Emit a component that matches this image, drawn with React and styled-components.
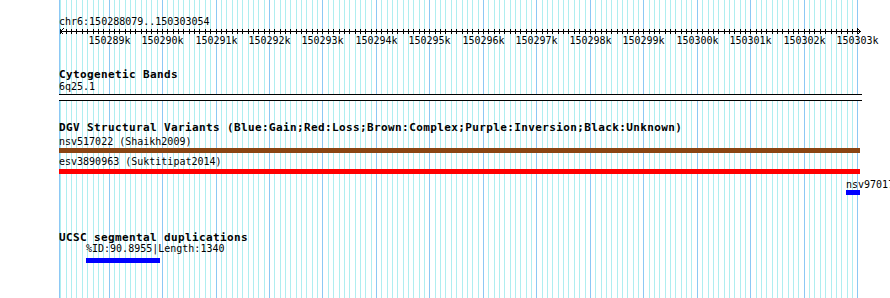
import React from "react";
import styled, { createGlobalStyle } from "styled-components";

const START = 150288079;
const END = 150303054;
const WIDTH = 803;
const SCALE = 0.05348;

// panel-relative pixel for a base position
const toX = (bp) => {
  const clamped = Math.min(Math.max(bp, START), END);
  return Math.floor(0.8 + (clamped - START) * SCALE);
};

const GlobalStyle = createGlobalStyle`
  body {
    margin: 0;
    background: #fff;
  }
`;

const Panel = styled.div`
  position: relative;
  width: ${WIDTH}px;
  height: 298px;
  margin-left: 59px;
`;

const GridLayer = styled.svg`
  position: absolute;
  top: 0;
  left: 0;
  overflow: hidden;
  shape-rendering: crispEdges;
`;

const Tracks = styled.div`
  position: relative;
  display: flex;
  flex-direction: column;
  font-family: "DejaVu Sans Mono", "Liberation Mono", monospace;
  color: #000;
`;

const Label = styled.div`
  font-size: 10px;
  line-height: 13px;
  height: 13px;
  white-space: nowrap;
  margin-top: ${(p) => p.$top || 0}px;
`;

const TrackTitle = styled.div`
  font-size: 11px;
  font-weight: bold;
  letter-spacing: 0.38px;
  line-height: 13px;
  height: 13px;
  white-space: nowrap;
  margin-top: ${(p) => p.$top || 0}px;
`;

const Ruler = styled.svg`
  display: block;
  overflow: visible;
  shape-rendering: crispEdges;
`;

const Cytoband = styled.div`
  margin-top: 1px;
  height: 5px;
  background: #fff;
  border-top: 1px solid #000;
  border-bottom: 1px solid #000;
`;

const Feature = styled.div`
  display: flex;
  flex-direction: column;
  align-items: flex-start;
  margin-top: ${(p) => p.$top || 0}px;
`;

const Bar = styled.div`
  height: 5px;
  margin-top: ${(p) => p.$gap || 0}px;
  background: ${(p) => p.$color};
`;

const minorTicks = [];
for (let bp = 150288100; bp <= END; bp += 100) minorTicks.push(bp);
const majorTicks = minorTicks.filter((bp) => bp % 1000 === 0);

const Grid = () => (
  <GridLayer width={WIDTH} height={298}>
    {minorTicks.map((bp) => (
      <rect
        key={bp}
        x={toX(bp)}
        y={0}
        width={1}
        height={298}
        fill={bp % 1000 === 0 ? "#8cc8f4" : "#afeef0"}
      />
    ))}
    <rect x={0} y={0} width={1} height={298} fill="#8cc8f4" />
  </GridLayer>
);

const Scale = () => (
  <Ruler width={WIDTH} height={19}>
    <rect x={1} y={3} width={WIDTH - 2} height={1} fill="#000" />
    <path d="M1.5 3.5 L4.5 0.5 M1.5 3.5 L4.5 6.5" stroke="#000" fill="none" />
    <path d="M801.5 3.5 L798.5 0.5 M801.5 3.5 L798.5 6.5" stroke="#000" fill="none" />
    {minorTicks.map((bp) => (
      <rect key={bp} x={toX(bp)} y={1} width={1} height={5} fill="#000" />
    ))}
    {majorTicks.map((bp) => (
      <text
        key={bp}
        x={toX(bp) + 0.5}
        y={16}
        textAnchor="middle"
        fontFamily='"DejaVu Sans Mono", "Liberation Mono", monospace'
        fontSize="10"
        fill="#000"
      >
        {bp / 1000}k
      </text>
    ))}
  </Ruler>
);

const dgv = [
  { name: "nsv517022 (Shaikh2009)", start: 150280000, end: 150320000, color: "#8b4513", top: 1, gap: 0 },
  { name: "esv3890963 (Suktitipat2014)", start: 150270000, end: 150330000, color: "#ff0000", top: 2, gap: 1 },
  { name: "nsv97017", start: 150302780, end: 150306000, color: "#0000ff", top: 4, gap: -1 },
];

const FeatureRow = ({ f }) => {
  const x = toX(f.start);
  const w = toX(f.end) - x;
  return (
    <Feature $top={f.top}>
      <Label style={{ marginLeft: x }}>{f.name}</Label>
      <Bar $color={f.color} $gap={f.gap} style={{ marginLeft: x, width: w }} />
    </Feature>
  );
};

const App = () => (
  <>
    <GlobalStyle />
    <Panel>
      <Grid />
      <Tracks>
        <Label $top={15}>chr6:150288079..150303054</Label>
        <Scale />

        <TrackTitle $top={21}>Cytogenetic Bands</TrackTitle>
        <Label $top={-1}>6q25.1</Label>
        <Cytoband />

        <TrackTitle $top={20}>
          DGV Structural Variants (Blue:Gain;Red:Loss;Brown:Complex;Purple:Inversion;Black:Unknown)
        </TrackTitle>
        {dgv.map((f) => (
          <FeatureRow key={f.name} f={f} />
        ))}

        <TrackTitle $top={36}>UCSC segmental duplications</TrackTitle>
        <FeatureRow
          f={{
            name: "%ID:90.8955|Length:1340",
            start: 150288569,
            end: 150289971,
            color: "#0000ff",
            top: -2,
            gap: 3,
          }}
        />
      </Tracks>
    </Panel>
  </>
);

export default App;
